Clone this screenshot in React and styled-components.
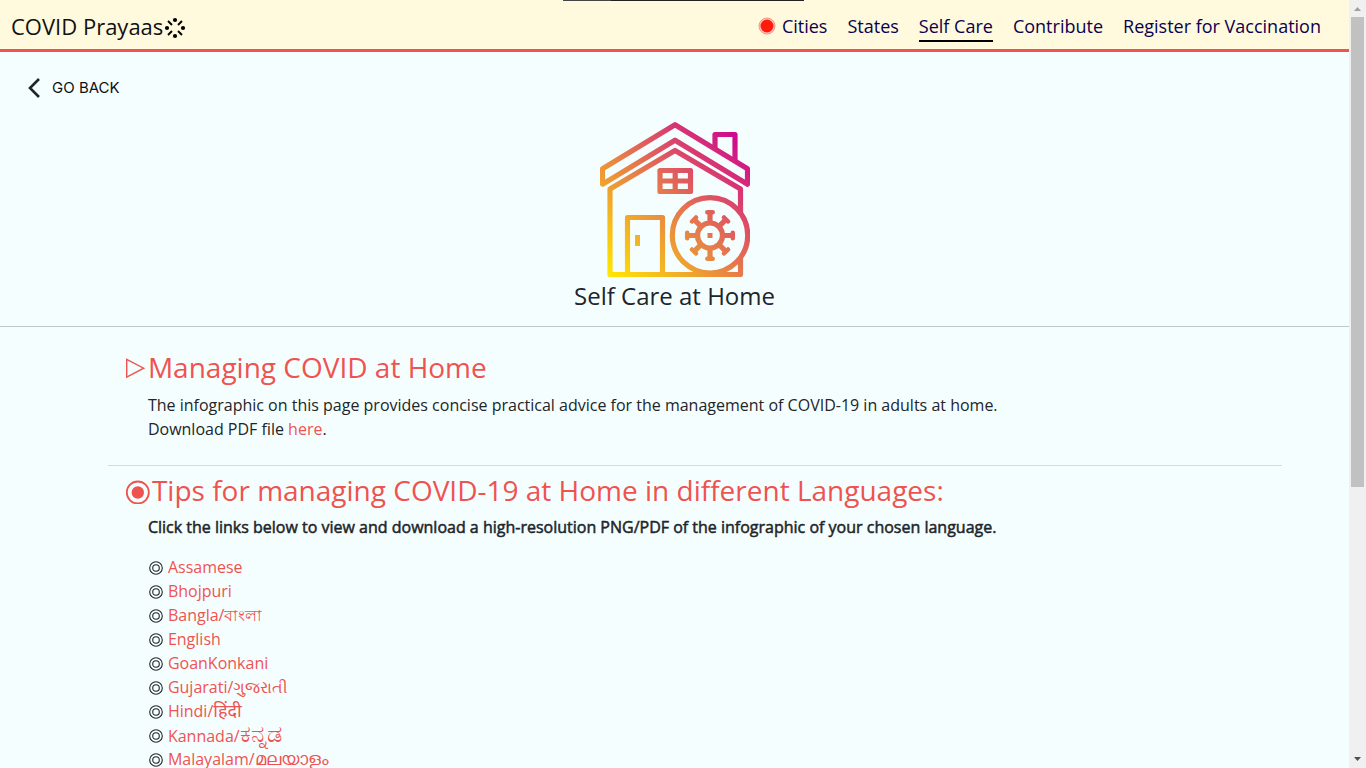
import React from "react";
import styled, { createGlobalStyle } from "styled-components";

const GlobalStyle = createGlobalStyle`
  * { box-sizing: border-box; }
  body {
    margin: 0;
    background: #f5feff;
    color: #212529;
    font-family: "Open Sans", "Noto Sans", sans-serif;
    font-size: 16px;
    font-weight: 400;
    line-height: 24px;
  }
  h1, h2, p, ul { margin: 0; padding: 0; font-weight: 400; }
`;

const Shell = styled.div`
  display: grid;
  grid-template-columns: minmax(0, 1fr) 17px;
  height: 100vh;
  overflow: hidden;
`;

const Page = styled.div`
  position: relative;
  overflow: hidden;
`;

const TopStrip = styled.div`
  position: absolute;
  top: 0;
  left: 563px;
  width: 241px;
  height: 1px;
  background: linear-gradient(90deg, #444 20%, #222 20%);
`;

const Header = styled.header`
  display: flex;
  align-items: center;
  justify-content: space-between;
  height: 52px;
  padding: 0 28px 0 11px;
  background: #fffadd;
  border-bottom: 3px solid #ef5350;
`;

const Brand = styled.a`
  display: flex;
  align-items: center;
  gap: 1px;
  color: #111;
  font-size: 22px;
  line-height: 32px;
  text-decoration: none;
  padding-top: 2px;

  svg { margin-top: 5px; }
`;

const Nav = styled.nav`
  display: flex;
  align-items: center;
  gap: 20px;
  padding-top: 4px;
`;

const NavLink = styled.a`
  display: flex;
  align-items: center;
  gap: 6px;
  height: 30px;
  color: #0b0050;
  font-size: 18px;
  text-decoration: none;
  border-bottom: 2px solid ${(p) => (p.$active ? "#000" : "transparent")};
`;

const BackButton = styled.button`
  display: flex;
  align-items: center;
  gap: 12px;
  margin: 24px 0 0 28px;
  padding: 0;
  height: 24px;
  border: 0;
  background: none;
  color: #111;
  font: 400 15px/24px Inter, sans-serif;
`;

const Hero = styled.section`
  display: flex;
  flex-direction: column;
  align-items: center;
  padding: 22px 0 12px;
  border-bottom: 1px solid #bfc8c9;
`;

const HeroTitle = styled.h1`
  padding-top: 1px;
  font-size: 24px;
  line-height: 36px;
`;

const Section = styled.section`
  margin: 0 5% 0 8%;
  padding: ${(p) => (p.$first ? "19px 0 24px 17px" : "3px 0 24px 17px")};
  border-bottom: 1px solid #d3dcde;
`;

const SectionTitle = styled.h2`
  display: flex;
  align-items: center;
  color: #ef5350;
  font-size: 28px;
  line-height: 42px;
`;

const Body = styled.div`
  padding: ${(p) => (p.$tight ? "4px" : "5px")} 0 0 23px;
`;

const Lead = styled.p`
  -webkit-text-stroke: 0.5px currentColor;
`;

const TextLink = styled.a`
  color: #ef5350;
  text-decoration: none;
`;

const Native = styled.span`
  font-size: ${(p) => p.$size}px;
  line-height: 20px;
`;

const LanguageList = styled.ul`
  padding-top: 16px;
  list-style: none;

  li {
    display: flex;
    align-items: center;
    gap: 4px;
    height: 24px;
  }
`;

const Scrollbar = styled.div`
  display: flex;
  flex-direction: column;
  justify-content: space-between;
  align-items: center;
  background: #f0f0f0;
`;

const Thumb = styled.div`
  width: 13px;
  height: 470px;
  margin-bottom: auto;
  background: #c1c1c1;
`;

function BrandMark() {
  return (
    <svg width="22" height="22" viewBox="0 0 22 22" aria-hidden="true">
      {[[11, 3], [19, 11], [11, 19], [3, 11]].map(([x, y]) => (
        <circle key={`${x}-${y}`} cx={x} cy={y} r="2.100" />
      ))}
      <path d="M4 4l4 4M14 8l4-4M4 18l4-4M14 14l4 4" stroke="#000" strokeWidth="1.900" />
    </svg>
  );
}

function LiveDot() {
  return (
    <svg width="18" height="18" viewBox="0 0 18 18" aria-hidden="true">
      <circle cx="9" cy="9" r="8" fill="#ffcabb" stroke="#f89482" />
      <circle cx="9" cy="9" r="6.500" fill="#ff1c0c" />
    </svg>
  );
}

function HouseArt() {
  return (
    <svg width="150" height="155" viewBox="0 0 150 155" aria-hidden="true">
      <defs>
        <linearGradient id="sunset" gradientUnits="userSpaceOnUse" x1="7" y1="150" x2="139" y2="18">
          <stop offset="0" stopColor="#ffe600" />
          <stop offset="0.5" stopColor="#e67b4a" />
          <stop offset="1" stopColor="#ce0a8e" />
        </linearGradient>
      </defs>
      <g fill="none" stroke="url(#sunset)" strokeWidth="5.200" strokeLinejoin="round">
        <path d="M75 2.700L2.500 46.700v15.500L75 18.200l72.500 44V46.700z" />
        <path d="M115 26V12.500h20V38" />
        <path d="M140.500 90V67L75 28.500L10 67v85.500h130.500V136" />
        <path d="M60 48.500h30.500v21H60zM75.200 48.500v21M60 59h30.500" />
        <path d="M27.500 152V95.500H62.500V152" />
        <circle cx="110" cy="113.300" r="37.700" />
        <circle cx="110" cy="113.500" r="12.500" />
        <path d="M110 101V91M110 126v10M97.500 113.500h-10M122.500 113.500h10M101.200 104.700l-7-7M118.800 104.700l7-7M101.200 122.300l-7 7M118.800 122.300l7 7" />
        <path strokeLinecap="round" strokeWidth="4.500" d="M107.300 90.200h5.400M107.300 136.800h5.400M87.200 110.800v5.400M132.800 110.800v5.400M92 99.500l4-4M124 95.500l4 4M92 127.500l4 4M124 131.500l4-4" />
      </g>
      <path fill="url(#sunset)" d="M35 113h5v11h-5zM107.500 111h5v5h-5z" />
    </svg>
  );
}

function TriangleMark() {
  return (
    <svg width="23" height="28" viewBox="0 0 23 28" aria-hidden="true">
      <path d="M1.700 6.500v17.500l17-8.800z" fill="none" stroke="#ef5350" strokeWidth="1.400" />
    </svg>
  );
}

function TargetMark() {
  return (
    <svg width="27" height="28" viewBox="0 0 27 28" aria-hidden="true">
      <circle cx="12.800" cy="16.500" r="11" fill="none" stroke="#ef5350" strokeWidth="1.800" />
      <circle cx="12.800" cy="16.500" r="6.200" fill="#ef5350" />
    </svg>
  );
}

function Bullet() {
  return (
    <svg width="16" height="16" viewBox="0 0 16 16" fill="none" stroke="#212529" strokeWidth="1.100" aria-hidden="true">
      <circle cx="8" cy="9" r="6.300" />
      <circle cx="8" cy="9" r="3.300" />
    </svg>
  );
}

const navItems = ["Cities", "States", "Self Care", "Contribute", "Register for Vaccination"];

const languages = [
  { name: "Assamese" },
  { name: "Bhojpuri" },
  { name: "Bangla/", native: "বাংলা", lang: "bn", size: 16 },
  { name: "English" },
  { name: "GoanKonkani" },
  { name: "Gujarati/", native: "ગુજરાતી", lang: "gu", size: 16 },
  { name: "Hindi/", native: "हिंदी", lang: "hi", size: 18 },
  { name: "Kannada/", native: "ಕನ್ನಡ", lang: "kn", size: 24 },
  { name: "Malayalam/", native: "മലയാളം", lang: "ml", size: 18 },
];

export default function App() {
  return (
    <Shell>
      <GlobalStyle />
      <Page>
        <Header>
          <Brand href="#home">COVID Prayaas<BrandMark /></Brand>
          <Nav>
            {navItems.map((item) => (
              <NavLink key={item} href="#nav" $active={item === "Self Care"}>
                {item === "Cities" && <LiveDot />}
                {item}
              </NavLink>
            ))}
          </Nav>
        </Header>
        <TopStrip />
        <BackButton type="button">
          <svg width="12" height="20" viewBox="0 0 12 20" fill="none" stroke="#212529" strokeWidth="2.600" aria-hidden="true">
            <path d="M11 1L2 10l9 9" />
          </svg>
          GO BACK
        </BackButton>
        <Hero>
          <HouseArt />
          <HeroTitle>Self Care at Home</HeroTitle>
        </Hero>
        <main>
          <Section $first>
            <SectionTitle><TriangleMark />Managing COVID at Home</SectionTitle>
            <Body>
              <p>The infographic on this page provides concise practical advice for the management of COVID-19 in adults at home.</p>
              <p>Download PDF file <TextLink href="#pdf">here</TextLink>.</p>
            </Body>
          </Section>
          <Section>
            <SectionTitle><TargetMark />Tips for managing COVID-19 at Home in different Languages:</SectionTitle>
            <Body $tight>
              <Lead>Click the links below to view and download a high-resolution PNG/PDF of the infographic of your chosen language.</Lead>
              <LanguageList>
                {languages.map(({ name, native, lang, size }) => (
                  <li key={name}>
                    <Bullet />
                    <TextLink href="#language">
                      {name}
                      {native && <Native lang={lang} $size={size}>{native}</Native>}
                    </TextLink>
                  </li>
                ))}
              </LanguageList>
            </Body>
          </Section>
        </main>
      </Page>
      <Scrollbar aria-hidden="true">
        <svg width="17" height="17" viewBox="0 0 17 17"><path d="M5 11h7L8.500 7z" fill="#a0a0a0" /></svg>
        <Thumb />
        <svg width="17" height="17" viewBox="0 0 17 17"><path d="M5 6h7l-3.500 4z" fill="#505050" /></svg>
      </Scrollbar>
    </Shell>
  );
}
